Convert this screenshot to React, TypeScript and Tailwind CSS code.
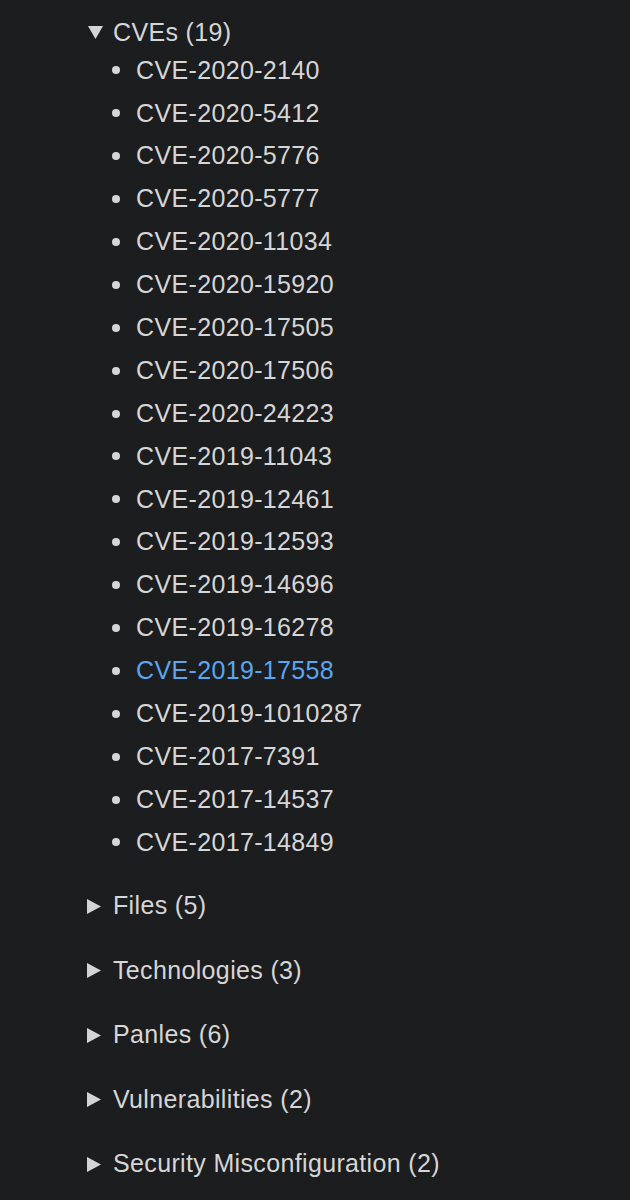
const cves = [
  "CVE-2020-2140",
  "CVE-2020-5412",
  "CVE-2020-5776",
  "CVE-2020-5777",
  "CVE-2020-11034",
  "CVE-2020-15920",
  "CVE-2020-17505",
  "CVE-2020-17506",
  "CVE-2020-24223",
  "CVE-2019-11043",
  "CVE-2019-12461",
  "CVE-2019-12593",
  "CVE-2019-14696",
  "CVE-2019-16278",
  "CVE-2019-17558",
  "CVE-2019-1010287",
  "CVE-2017-7391",
  "CVE-2017-14537",
  "CVE-2017-14849",
];

const sections = [
  "Files (5)",
  "Technologies (3)",
  "Panles (6)",
  "Vulnerabilities (2)",
  "Security Misconfiguration (2)",
];

function CaretDown() {
  return (
    <svg width="15" height="13" viewBox="0 0 15 13" className="shrink-0">
      <path d="M0 0 H15 L7.5 13 Z" fill="#d4d4d4" />
    </svg>
  );
}

function CaretRight() {
  return (
    <svg width="14" height="15" viewBox="0 0 14 15" className="shrink-0">
      <path d="M0 0 L14 7.5 L0 15 Z" fill="#d4d4d4" />
    </svg>
  );
}

export default function App() {
  return (
    <div
      className="min-h-screen w-full bg-[#1c1d1f] text-[#d6d6d6] text-[25px] tracking-[0.35px] pt-[16px] pl-[87px]"
      style={{ fontFamily: '"Liberation Sans", Arial, sans-serif' }}
    >
      {/* Expanded section */}
      <div className="flex items-center h-[33px]">
        <span className="w-[26px] flex pl-[1px]">
          <CaretDown />
        </span>
        <span>CVEs (19)</span>
      </div>
      <ul>
        {cves.map((cve) => (
          <li key={cve} className="flex items-center h-[42.9px]">
            <span className="w-[49px] flex justify-end pr-[16px]">
              <span className="w-[8px] h-[8px] rounded-full bg-[#d6d6d6]" />
            </span>
            <span className={cve === "CVE-2019-17558" ? "text-[#5aa6f0]" : ""}>{cve}</span>
          </li>
        ))}
      </ul>

      {/* Collapsed sections */}
      <div className="mt-[10px]">
        {sections.map((s) => (
          <div key={s} className="flex items-center h-[64.5px]">
            <span className="w-[26px] flex">
              <CaretRight />
            </span>
            <span>{s}</span>
          </div>
        ))}
      </div>
    </div>
  );
}
